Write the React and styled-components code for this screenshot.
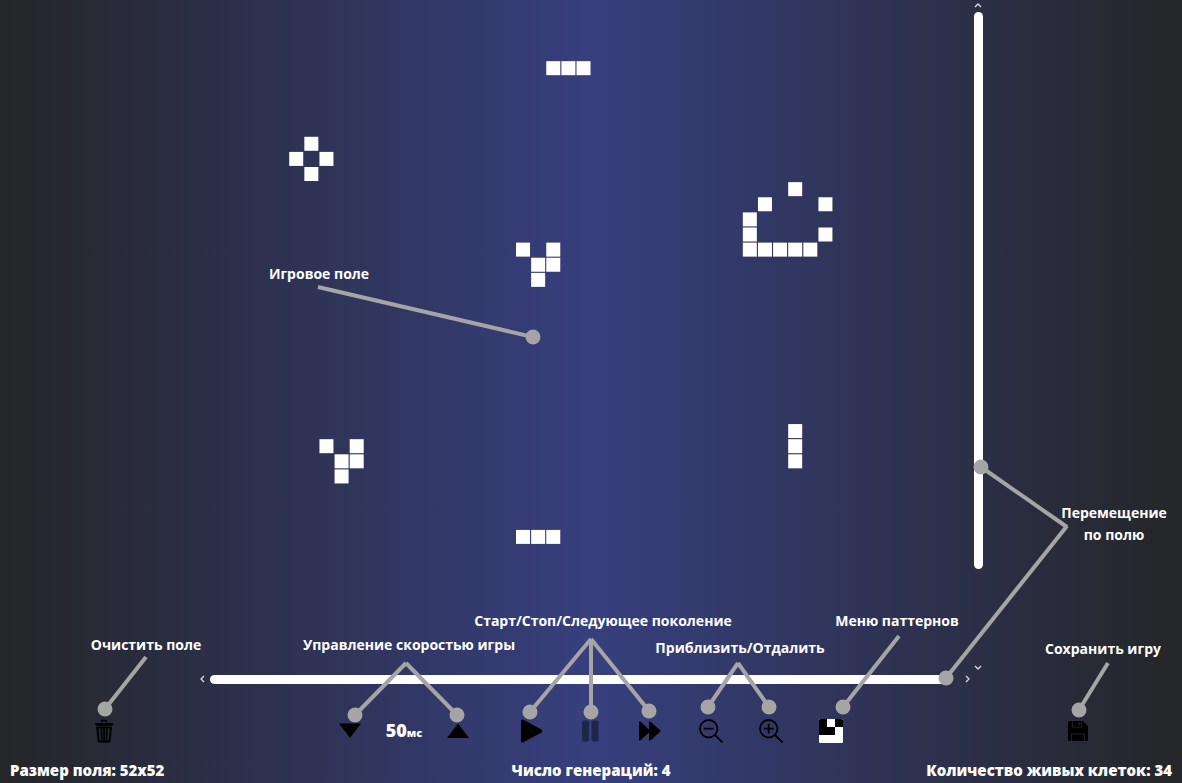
import React from "react";
import styled, { createGlobalStyle } from "styled-components";

const GlobalStyle = createGlobalStyle`
  * { box-sizing: border-box; }
  body { margin: 0; overflow: hidden; }
`;

const Page = styled.div`
  position: relative;
  display: flex;
  flex-direction: column;
  height: 100vh;
  color: #fff;
  font-family: "Open Sans", "Noto Sans", sans-serif;
  background: linear-gradient(90deg, #252628, #373f7e 50%, #252628);
`;

const Board = styled.main`
  flex: 1;
  min-height: 0;
  width: 66.5%;
  margin: 0 auto;
  display: grid;
  grid-template-columns: 1fr 12px;
  grid-template-rows: minmax(0, 1fr) 14px;
`;

const Field = styled.svg`
  display: block;
  width: 100%;
  height: 100%;
  fill: #fff;
`;

const Scroller = styled.div`
  display: flex;
  align-items: center;
  gap: 2px;
  flex-direction: ${(p) => (p.$vertical ? "column" : "row")};
`;

const Track = styled.div`
  flex: 1;
  display: flex;
  flex-direction: ${(p) => (p.$vertical ? "column" : "row")};
`;

const Thumb = styled.div`
  flex: 0 0 ${(p) => p.$size};
  ${(p) => (p.$vertical ? "width" : "height")}: 9px;
  border-radius: 5px;
  background: #fff;
`;

const IconButton = styled.button`
  display: flex;
  align-items: center;
  justify-content: center;
  width: ${(p) => p.$w || 24}px;
  height: ${(p) => p.$h || 24}px;
  padding: 0;
  border: 0;
  background: none;
  color: ${(p) => p.$color || "#000"};
  cursor: pointer;
  &:disabled { opacity: 0.4; }
  svg { display: block; width: 100%; height: 100%; }
`;

const Toolbar = styled.div`
  display: grid;
  grid-template-columns: 1fr auto 1fr;
  align-items: center;
  height: 34px;
  margin-top: 28px;
  padding: 0 92px;
`;

const Side = styled.div`
  display: flex;
  justify-content: ${(p) => (p.$end ? "flex-end" : "flex-start")};
`;

const Groups = styled.div`
  display: flex;
`;

const Group = styled.div`
  display: flex;
  align-items: center;
  gap: ${(p) => p.$gap}px;
  margin-right: ${(p) => p.$after || 0}px;
`;

const Speed = styled.output`
  width: 38px;
  font-size: 18px;
  line-height: 24px;
  font-weight: 800;
  text-align: center;
  white-space: nowrap;
  small { font-size: 11px; }
`;

const Status = styled.footer`
  display: grid;
  grid-template-columns: 1fr auto 1fr;
  padding: 0 10px 1px;
  margin-top: 10px;
  font-size: 15px;
  line-height: 24px;
  font-weight: 800;
  span:last-child { text-align: right; }
`;

const Guide = styled.div`
  position: absolute;
  inset: 0;
  pointer-events: none;
  svg { position: absolute; width: 100%; height: 100%; }
`;

const Note = styled.span`
  position: absolute;
  left: ${(p) => p.$x}%;
  top: ${(p) => p.$y}%;
  transform: translate(-50%, -50%);
  font-size: 14px;
  line-height: 22px;
  font-weight: 700;
  text-align: center;
  white-space: pre;
`;

const PITCH = 15.12;
const CELLS = [
  [23, 4], [24, 4], [25, 4],
  [7, 9], [6, 10], [8, 10], [7, 11],
  [39, 12], [37, 13], [41, 13], [36, 14], [36, 15], [41, 15],
  [36, 16], [37, 16], [38, 16], [39, 16], [40, 16],
  [21, 16], [23, 16], [22, 17], [23, 17], [22, 18],
  [39, 28], [39, 29], [39, 30],
  [8, 29], [10, 29], [9, 30], [10, 30], [9, 31],
  [21, 35], [22, 35], [23, 35],
];

const px = (v) => (v / 1182) * 100;
const py = (v) => (v / 783) * 100;

const NOTES = [
  ["Игровое поле", 319, 274],
  ["Перемещение\nпо полю", 1114, 524],
  ["Старт/Стоп/Следующее поколение", 603, 621],
  ["Управление скоростью игры", 409, 645],
  ["Приблизить/Отдалить", 740, 648],
  ["Меню паттернов", 897, 621],
  ["Очистить поле", 146, 645],
  ["Сохранить игру", 1103, 649],
];

const LEADS = [
  [318, 287, 533, 337],
  [1067, 527, 981, 467],
  [1067, 526, 946, 678],
  [591, 639, 530, 712],
  [591, 639, 591, 712],
  [591, 639, 649, 711],
  [406, 663, 355, 715],
  [406, 663, 457, 715],
  [738, 663, 708, 707],
  [738, 663, 769, 707],
  [899, 636, 843, 707],
  [146, 657, 105, 709],
  [1108, 663, 1079, 710],
];

const Chevron = ({ d }) => (
  <svg viewBox="0 0 10 10" fill="none" stroke="currentColor" strokeWidth="1.3">
    <path d={d} />
  </svg>
);

const Zoom = ({ plus }) => (
  <svg viewBox="0 0 24 24" fill="none" stroke="currentColor" strokeWidth="1.8">
    <circle cx="9.7" cy="9.7" r="8.7" />
    <path d={"M16 16L23.4 23.4M4.8 9.7h9.8" + (plus ? "M9.7 4.8v9.8" : "")} />
  </svg>
);

export default function App() {
  return (
    <>
      <GlobalStyle />
      <Page>
        <Board>
          <Field viewBox="0 0 774 672" preserveAspectRatio="xMinYMin slice" aria-label="Игровое поле">
            {CELLS.map(([c, r]) => (
              <rect key={`${c}-${r}`} x={c * PITCH + 0.5} y={r * PITCH + 0.7} width="14" height="14" />
            ))}
          </Field>
          <Scroller $vertical>
            <IconButton $w={10} $h={10} $color="#ddd" aria-label="Вверх"><Chevron d="M2 7l3-3 3 3" /></IconButton>
            <Track $vertical><Thumb $vertical $size="86%" /></Track>
            <IconButton $w={10} $h={10} $color="#ddd" aria-label="Вниз"><Chevron d="M2 4l3 3 3-3" /></IconButton>
          </Scroller>
          <Scroller>
            <IconButton $w={10} $h={10} $color="#ddd" aria-label="Влево"><Chevron d="M6 2l-3 3 3 3" /></IconButton>
            <Track><Thumb $size="98%" /></Track>
            <IconButton $w={10} $h={10} $color="#ddd" aria-label="Вправо"><Chevron d="M4 2l3 3-3 3" /></IconButton>
          </Scroller>
        </Board>
        <Toolbar>
          <Side>
            <IconButton aria-label="Очистить поле">
              <svg viewBox="0 0 24 24" fill="none" stroke="currentColor">
                <path d="M4.400 5.300h15.400" strokeWidth="2.800" strokeLinecap="round" />
                <path d="M9.600 3.400V1.400h5v2" strokeWidth="1.500" />
                <path d="M5.300 8.500h13.600l-1.400 14H6.700z" strokeWidth="2" strokeLinejoin="round" />
                <path d="M9.300 9.500l.5 12M12.100 9.500v12M14.900 9.500l-.5 12" strokeWidth="1.700" />
              </svg>
            </IconButton>
          </Side>
          <Groups>
            <Group $gap={24} $after={50}>
              <IconButton $w={22} aria-label="Уменьшить">
                <svg viewBox="0 0 22 24" fill="currentColor"><path d="M0 4.5h22L11 19z" /></svg>
              </IconButton>
              <Speed>50<small>мс</small></Speed>
              <IconButton $w={22} aria-label="Увеличить">
                <svg viewBox="0 0 22 24" fill="currentColor"><path d="M0 19h22L11 4.5z" /></svg>
              </IconButton>
            </Group>
            <Group $gap={35} $after={38}>
              <IconButton aria-label="Старт">
                <svg viewBox="0 0 24 24" fill="currentColor"><path d="M2 2Q2 0 4 .5L22.5 10.6Q24 12 22.5 13.4L4 23.5Q2 24 2 22z" /></svg>
              </IconButton>
              <IconButton disabled aria-label="Стоп">
                <svg viewBox="0 0 24 24" fill="currentColor"><rect x="4" y="1.500" width="7" height="21" rx="2" /><rect x="13.500" y="1.500" width="7" height="21" rx="2" /></svg>
              </IconButton>
              <IconButton aria-label="Следующее поколение">
                <svg viewBox="0 0 24 24" fill="currentColor" stroke="currentColor" strokeWidth="2" strokeLinejoin="round">
                  <path d="M3 3.500v17L12 12zM13 3.500v17L22.500 12z" />
                </svg>
              </IconButton>
            </Group>
            <Group $gap={36}>
              <IconButton aria-label="Отдалить"><Zoom /></IconButton>
              <IconButton aria-label="Приблизить"><Zoom plus /></IconButton>
              <IconButton aria-label="Меню паттернов">
                <svg viewBox="0 0 24 24">
                  <rect width="24" height="24" rx="1" fill="#fff" />
                  <path d="M1 0h7v8h8v8H0V1zM16 0h7l1 1v7h-8z" fill="#000" />
                </svg>
              </IconButton>
            </Group>
          </Groups>
          <Side $end>
            <IconButton aria-label="Сохранить игру">
              <svg viewBox="0 0 24 24" fill="currentColor">
                <path d="M2 4q0-2 2-2h2v5.500q0 1 1 1h8q1 0 1-1V2h1l5 5v13.500q0 1.500-1.500 1.500H19v-6.500q0-1-1-1H6q-1 0-1 1V22H3.500Q2 22 2 20.500z" />
                <path fillRule="evenodd" d="M6.700 2h8.600v5.800H6.700zM12.500 3.200v3h1.200v-3z" />
                <path d="M5.800 15.300h12.400V22H5.800z" />
              </svg>
            </IconButton>
          </Side>
        </Toolbar>
        <Status>
          <span>Размер поля: 52x52</span>
          <span>Число генераций: 4</span>
          <span>Количество живых клеток: 34</span>
        </Status>
        <Guide>
          <svg stroke="#a5a5a5" strokeWidth="4" fill="#a5a5a5">
            {LEADS.map(([x1, y1, x2, y2]) => (
              <g key={`${x2}-${y2}`}>
                <line x1={`${px(x1)}%`} y1={`${py(y1)}%`} x2={`${px(x2)}%`} y2={`${py(y2)}%`} />
                <circle cx={`${px(x2)}%`} cy={`${py(y2)}%`} r="7.500" stroke="none" />
              </g>
            ))}
          </svg>
          {NOTES.map(([text, x, y]) => (
            <Note key={text} $x={px(x)} $y={py(y)}>{text}</Note>
          ))}
        </Guide>
      </Page>
    </>
  );
}
